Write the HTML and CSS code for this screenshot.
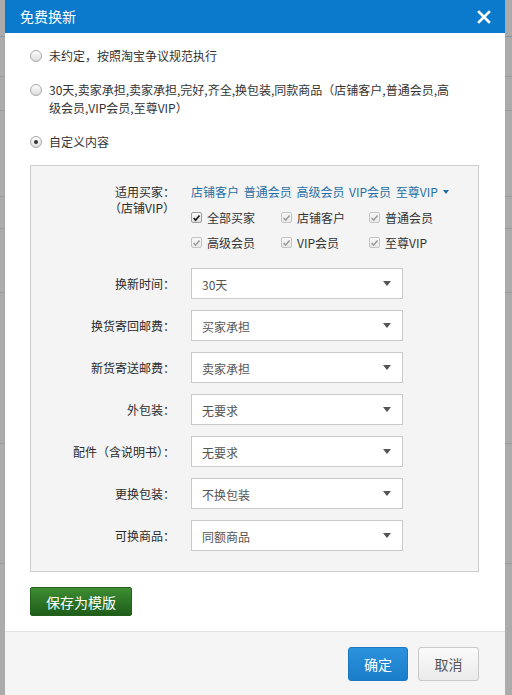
FILE: index.html
```html
<!DOCTYPE html>
<html lang="zh-CN">
<head>
<meta charset="utf-8">
<title>免费换新</title>
<link rel="stylesheet" href="styles.css">
</head>
<body>
<div class="dialog">
  <div class="dlg-head">
    <span class="dlg-title">免费换新</span>
    <svg class="close" width="14" height="14" viewBox="0 0 14 14"><path d="M2 2 L12 12 M12 2 L2 12" stroke="#fff" stroke-width="2.6" stroke-linecap="square"/></svg>
  </div>
  <div class="dlg-body">
    <div class="opt opt-1"><span class="radio"></span><span class="opt-text">未约定，按照淘宝争议规范执行</span></div>
    <div class="opt opt-2"><span class="radio"></span><span class="opt-text">30天,卖家承担,卖家承担,完好,齐全,换包装,同款商品（店铺客户,普通会员,高<br>级会员,VIP会员,至尊VIP）</span></div>
    <div class="opt opt-3"><span class="radio radio-on"></span><span class="opt-text">自定义内容</span></div>

    <div class="panel">
      <div class="row row-buyers">
        <div class="lbl lbl-two">适用买家：<br>（店铺VIP）</div>
        <div class="ctl">
          <div class="links">店铺客户 普通会员 高级会员 VIP会员 至尊VIP<span class="caret"></span></div>
          <div class="checks">
            <label class="chk"><span class="box box-on"><svg width="10" height="10" viewBox="0 0 10 10"><path d="M1.8 5 L4 7.4 L8.4 2.2" fill="none" stroke="#222" stroke-width="1.9"/></svg></span>全部买家</label>
            <label class="chk"><span class="box box-dis"><svg width="10" height="10" viewBox="0 0 10 10"><path d="M1.8 5 L4 7.4 L8.4 2.2" fill="none" stroke="#9a9a9a" stroke-width="1.7"/></svg></span>店铺客户</label>
            <label class="chk"><span class="box box-dis"><svg width="10" height="10" viewBox="0 0 10 10"><path d="M1.8 5 L4 7.4 L8.4 2.2" fill="none" stroke="#9a9a9a" stroke-width="1.7"/></svg></span>普通会员</label>
            <label class="chk"><span class="box box-dis"><svg width="10" height="10" viewBox="0 0 10 10"><path d="M1.8 5 L4 7.4 L8.4 2.2" fill="none" stroke="#9a9a9a" stroke-width="1.7"/></svg></span>高级会员</label>
            <label class="chk"><span class="box box-dis"><svg width="10" height="10" viewBox="0 0 10 10"><path d="M1.8 5 L4 7.4 L8.4 2.2" fill="none" stroke="#9a9a9a" stroke-width="1.7"/></svg></span>VIP会员</label>
            <label class="chk"><span class="box box-dis"><svg width="10" height="10" viewBox="0 0 10 10"><path d="M1.8 5 L4 7.4 L8.4 2.2" fill="none" stroke="#9a9a9a" stroke-width="1.7"/></svg></span>至尊VIP</label>
          </div>
        </div>
      </div>
      <div class="row"><div class="lbl">换新时间：</div><div class="select"><span>30天</span><span class="arrow"></span></div></div>
      <div class="row"><div class="lbl">换货寄回邮费：</div><div class="select"><span>买家承担</span><span class="arrow"></span></div></div>
      <div class="row"><div class="lbl">新货寄送邮费：</div><div class="select"><span>卖家承担</span><span class="arrow"></span></div></div>
      <div class="row"><div class="lbl">外包装：</div><div class="select"><span>无要求</span><span class="arrow"></span></div></div>
      <div class="row"><div class="lbl">配件（含说明书）：</div><div class="select"><span>无要求</span><span class="arrow"></span></div></div>
      <div class="row"><div class="lbl">更换包装：</div><div class="select"><span>不换包装</span><span class="arrow"></span></div></div>
      <div class="row"><div class="lbl">可换商品：</div><div class="select"><span>同额商品</span><span class="arrow"></span></div></div>
    </div>

    <button class="btn-green">保存为模版</button>
  </div>
  <div class="dlg-foot">
    <button class="btn-primary">确定</button>
    <button class="btn-default">取消</button>
  </div>
</div>
</body>
</html>
```
FILE: styles.css
```css
html, body {
  margin: 0;
  padding: 0;
}
body {
  width: 512px;
  height: 695px;
  overflow: hidden;
  font-family: "Noto Sans CJK SC", "Noto Sans", sans-serif;
  font-size: 12px;
  color: #333;
  background-color: #ababab;
  background-image:
    linear-gradient(to bottom, transparent 36px, #8f8f8f 36px, #8f8f8f 37px, transparent 37px),
    linear-gradient(to bottom, transparent 76px, #9a9a9a 76px, #9a9a9a 77px, transparent 77px),
    linear-gradient(to bottom, transparent 110px, #9a9a9a 110px, #9a9a9a 111px, transparent 111px),
    linear-gradient(to bottom, transparent 196px, #9a9a9a 196px, #9a9a9a 197px, transparent 197px),
    linear-gradient(to bottom, transparent 228px, #9a9a9a 228px, #9a9a9a 229px, transparent 229px),
    linear-gradient(to bottom, transparent 292px, #9a9a9a 292px, #9a9a9a 293px, transparent 293px),
    linear-gradient(to bottom, transparent 443px, #9a9a9a 443px, #9a9a9a 444px, transparent 444px),
    linear-gradient(to bottom, transparent 563px, #9a9a9a 563px, #9a9a9a 564px, transparent 564px);
}
.dialog {
  margin-left: 5px;
  width: 500px;
  height: 695px;
  background: #fff;
  display: flex;
  flex-direction: column;
}
.dlg-head {
  height: 33px;
  flex: none;
  background: #0b7acc;
  display: flex;
  align-items: center;
  justify-content: space-between;
  padding: 0 14px 0 15px;
}
.dlg-title {
  color: #fff;
  font-size: 14px;
  line-height: 33px;
}
.close {
  display: block;
}
.dlg-body {
  padding: 14px 26px 15px 25px;
  display: flex;
  flex-direction: column;
  align-items: flex-start;
}
.opt {
  display: flex;
  align-items: flex-start;
  line-height: 18px;
  color: #333;
}
.opt-1, .opt-2 { margin-bottom: 16px; }
.opt-3 { margin-bottom: 14px; }
.radio {
  flex: none;
  width: 10px;
  height: 10px;
  margin: 3px 7px 0 0;
  border: 1px solid #a9a9a9;
  border-radius: 50%;
  background: linear-gradient(#fdfdfd, #dcdcdc);
  display: flex;
  align-items: center;
  justify-content: center;
}
.radio-on::after {
  content: "";
  width: 4px;
  height: 4px;
  border-radius: 50%;
  background: #333;
}
.panel {
  align-self: stretch;
  border: 1px solid #cdcdcd;
  background: #f4f4f4;
  padding: 17px 0 20px 0;
  display: flex;
  flex-direction: column;
  gap: 11px;
}
.row {
  display: grid;
  grid-template-columns: 144px 212px;
  column-gap: 16px;
  align-items: center;
}
.row-buyers {
  align-items: start;
  margin-bottom: 2px;
}
.lbl {
  text-align: right;
  color: #2b2b2b;
  white-space: nowrap;
}
.lbl-two {
  line-height: 16px;
  padding-top: 1px;
}
.ctl {
  width: 280px;
}
.links {
  line-height: 18px;
  color: #1f6fa6;
  white-space: nowrap;
  display: flex;
  align-items: center;
  word-spacing: 2px;
}
.caret {
  width: 0;
  height: 0;
  margin-left: 5px;
  border-left: 3.5px solid transparent;
  border-right: 3.5px solid transparent;
  border-top: 4px solid #1f6fa6;
}
.checks {
  margin-top: 4px;
  display: grid;
  grid-template-columns: 90px 88px 90px;
  grid-auto-rows: 25px;
}
.chk {
  display: flex;
  align-items: center;
  color: #333;
  white-space: nowrap;
}
.box {
  width: 11px;
  height: 11px;
  box-sizing: border-box;
  margin-right: 5px;
  border: 1px solid #9c9c9c;
  border-radius: 2px;
  background: linear-gradient(#fefefe, #e2e2e2);
  display: flex;
  align-items: center;
  justify-content: center;
}
.box svg { display: block; }
.box-dis {
  border-color: #c4c4c4;
  background: linear-gradient(#f7f7f7, #e9e9e9);
}
.select {
  height: 31px;
  box-sizing: border-box;
  border: 1px solid #cacaca;
  background: #fff;
  display: flex;
  align-items: center;
  justify-content: space-between;
  padding: 2px 11px 0 10px;
  color: #555;
}
.arrow {
  width: 0;
  height: 0;
  margin-top: -3px;
  border-left: 4.5px solid transparent;
  border-right: 4.5px solid transparent;
  border-top: 5px solid #555;
}
button {
  font-family: inherit;
  cursor: pointer;
}
.btn-green {
  margin-top: 15px;
  width: 102px;
  height: 29px;
  border: 1px solid #22601c;
  border-radius: 2px;
  background: linear-gradient(#3e8d33, #1f5d1a);
  color: #fff;
  font-size: 14px;
  padding: 0;
}
.dlg-foot {
  flex: 1;
  border-top: 1px solid #e2e2e2;
  background: #f5f5f5;
  display: flex;
  justify-content: flex-end;
  align-items: flex-start;
  gap: 10px;
  padding: 15px 26px 0 0;
}
.btn-primary {
  width: 60px;
  height: 34px;
  border: 1px solid #1a78c2;
  border-radius: 3px;
  background: linear-gradient(#2b92de, #1a7dca);
  color: #fff;
  font-size: 14px;
  padding: 0;
}
.btn-default {
  width: 61px;
  height: 34px;
  border: 1px solid #c9c9c9;
  border-radius: 3px;
  background: linear-gradient(#fbfbfb, #ebebeb);
  color: #555;
  font-size: 14px;
  padding: 0;
}
```
